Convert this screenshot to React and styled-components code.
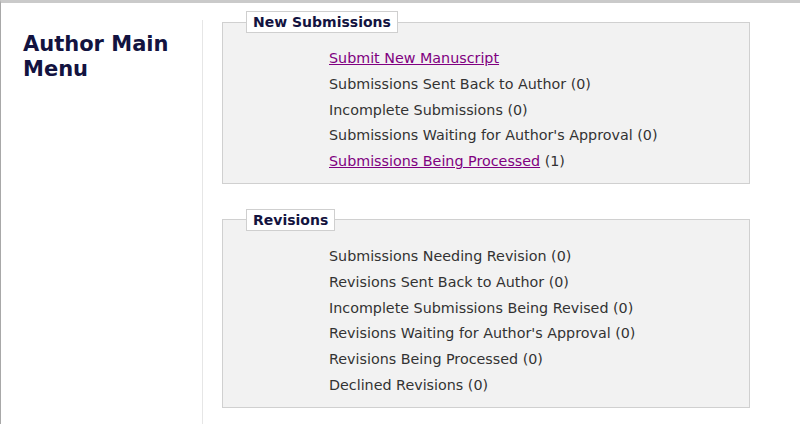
import React from "react";
import styled, { createGlobalStyle } from "styled-components";

const GlobalStyle = createGlobalStyle`
  body {
    margin: 0;
    background: #ffffff;
    font-family: "DejaVu Sans", Verdana, sans-serif;
  }
`;

const Page = styled.div`
  display: flex;
  min-height: 424px;
  border-top: 3px solid #cacaca;
  border-left: 1px solid #a8a8a8;
  box-sizing: border-box;
`;

const Sidebar = styled.div`
  width: 202px;
  margin-top: 17px;
  border-right: 1px solid #e6e6e6;
  padding-left: 22px;
  box-sizing: border-box;
`;

const Title = styled.h1`
  margin: 12px 0 0;
  font-size: 21px;
  line-height: 25px;
  font-weight: bold;
  color: #131340;
`;

const Main = styled.div`
  flex: 1;
  padding: 8px 50px 0 19px;
`;

const Box = styled.fieldset`
  margin: 0 0 25px;
  padding: 13px 0 8px 23px;
  background: #f2f2f2;
  border: 1px solid #d0d0d0;
`;

const Legend = styled.legend`
  padding: 0 6px;
  background: #ffffff;
  border: 1px solid #cfcfcf;
  font-size: 14px;
  line-height: 20px;
  font-weight: bold;
  color: #131340;
`;

const List = styled.ul`
  list-style: none;
  margin: 0 0 0 83px;
  padding: 0;
`;

const Item = styled.li`
  font-size: 14.3px;
  line-height: 25.8px;
  color: #333333;
  white-space: nowrap;
`;

const Link = styled.a`
  color: #800080;
  text-decoration: underline;
`;

const newSubmissions = [
  { label: "Submit New Manuscript", link: true },
  { label: "Submissions Sent Back to Author", count: 0 },
  { label: "Incomplete Submissions", count: 0 },
  { label: "Submissions Waiting for Author's Approval", count: 0 },
  { label: "Submissions Being Processed", count: 1, link: true },
];

const revisions = [
  { label: "Submissions Needing Revision", count: 0 },
  { label: "Revisions Sent Back to Author", count: 0 },
  { label: "Incomplete Submissions Being Revised", count: 0 },
  { label: "Revisions Waiting for Author's Approval", count: 0 },
  { label: "Revisions Being Processed", count: 0 },
  { label: "Declined Revisions", count: 0 },
];

function Section({ title, items }) {
  return (
    <Box>
      <Legend>{title}</Legend>
      <List>
        {items.map((item) => (
          <Item key={item.label}>
            {item.link ? <Link href="#">{item.label}</Link> : item.label}
            {item.count !== undefined && ` (${item.count})`}
          </Item>
        ))}
      </List>
    </Box>
  );
}

export default function App() {
  return (
    <>
      <GlobalStyle />
      <Page>
        <Sidebar>
          <Title>
            Author Main
            <br />
            Menu
          </Title>
        </Sidebar>
        <Main>
          <Section title="New Submissions" items={newSubmissions} />
          <Section title="Revisions" items={revisions} />
        </Main>
      </Page>
    </>
  );
}
